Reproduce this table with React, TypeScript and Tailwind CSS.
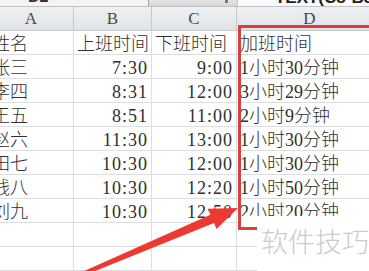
import React from 'react';

const rows = [
  ['张三', '7:30', '9:00', '1小时30分钟'],
  ['李四', '8:31', '12:00', '3小时29分钟'],
  ['王五', '8:51', '11:00', '2小时9分钟'],
  ['赵六', '11:30', '13:00', '1小时30分钟'],
  ['田七', '10:30', '12:00', '1小时30分钟'],
  ['钱八', '10:30', '12:20', '1小时50分钟'],
  ['刘九', '10:30', '12:50', '2小时20分钟'],
  ['', '', '', ''],
  ['', '', '', ''],
  ['', '', '', ''],
];

const cellFont = { fontFamily: '"Liberation Serif", "Noto Sans CJK SC", serif' };

const Cell = ({ children, right = false, time = false }) => (
  <div
    className={`h-6 border-r border-b border-[#dcdfe1] text-[18px] leading-6 pt-[1px] text-[#2f2f2f] font-light whitespace-nowrap overflow-hidden ${right ? 'text-right pr-[3px]' : 'pl-[3px]'} ${time ? 'tracking-[1px]' : ''}`}
    style={cellFont}
  >
    {children}
  </div>
);

const ColHead = ({ label }) => (
  <div
    className="h-6 flex items-center justify-center border-r border-b border-[#c6cacd] bg-gradient-to-b from-[#eef0f2] to-[#e1e4e7] text-[17px] text-[#4a4a4a] pt-[1px]"
    style={{ fontFamily: '"Liberation Serif", serif' }}
  >
    {label}
  </div>
);

export default function App() {
  return (
    <div className="relative w-[369px] h-[271px] overflow-hidden bg-white">
      {/* formula bar, only its bottom edge shows */}
      <div className="flex h-[7px] border-b border-[#bfc3c6] overflow-hidden">
        <div className="w-[148px] bg-[#f4f4f4] relative">
          <span className="absolute left-[28px] -top-[15px] text-[16px] font-bold text-[#333]" style={{ fontFamily: '"Liberation Sans", sans-serif' }}>D2</span>
        </div>
        <div className="w-[89px] bg-gradient-to-b from-[#e4e4e4] to-[#d6d6d6] border-l border-[#9ea2a5] relative">
          <span className="absolute left-[76px] -top-[2px] w-[3px] h-[5px] bg-[#777]" />
        </div>
        <div className="flex-1 bg-[#fafafa] border-l border-[#c6cacd] relative">
          <span className="absolute left-[27px] -top-[15px] text-[17px] font-bold text-[#222] whitespace-nowrap" style={{ fontFamily: '"Liberation Sans", "Noto Sans CJK SC", sans-serif' }}>=TEXT(C8-B8,"h小时m分钟")</span>
        </div>
      </div>

      {/* sheet grid */}
      <div className="grid grid-cols-[85px_78px_85px_146px] -ml-[11px]">
        <ColHead label="A" />
        <ColHead label="B" />
        <ColHead label="C" />
        <ColHead label="D" />

        <Cell>姓名</Cell>
        <Cell>上班时间</Cell>
        <Cell>下班时间</Cell>
        <Cell>加班时间</Cell>

        {rows.map((r, i) => (
          <React.Fragment key={i}>
            <Cell>{r[0]}</Cell>
            <Cell right time>{r[1]}</Cell>
            <Cell right time>{r[2]}</Cell>
            <Cell>{r[3]}</Cell>
          </React.Fragment>
        ))}
      </div>

      {/* soft patch under the watermark */}
      <div className="absolute left-[240px] top-[216px] w-[18px] h-[12px] bg-white z-10" />

      {/* highlight box around column D */}
      <div className="absolute left-[238px] top-[25px] w-[200px] h-[205px] border-l-[3px] border-t-[3px] border-b-[3px] border-[#d9403c] z-20" />

      {/* watermark */}
      <div className="absolute left-[257px] top-[216px] right-0 bottom-0 bg-white z-30 flex items-start pl-[4px] pt-[10px]">
        <span className="text-[27px] leading-[30px] text-[#cbcbcb] font-light whitespace-nowrap" style={{ fontFamily: '"Noto Sans CJK SC", sans-serif' }}>
          软件技巧
        </span>
      </div>

      {/* pointer arrow */}
      <svg className="absolute inset-0 z-40" width="369" height="271" viewBox="0 0 369 271">
        <polygon
          points="79.2,273.2 210.4,214.8 207.9,208.8 238,208 216.5,229 214,223 80.8,276.8"
          fill="#ec3a32"
        />
      </svg>
    </div>
  );
}
